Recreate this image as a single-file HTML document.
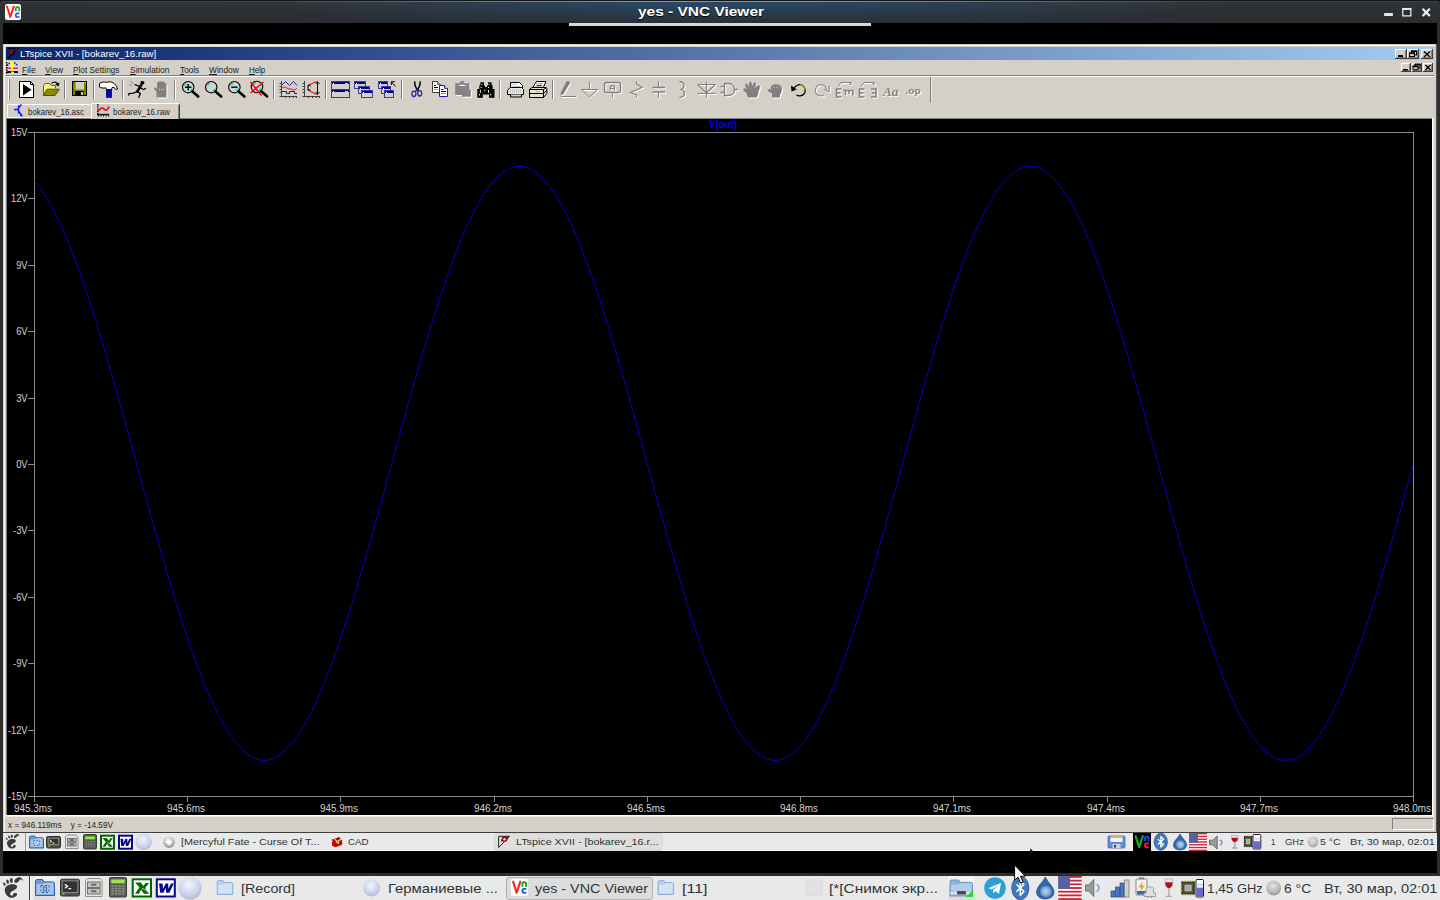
<!DOCTYPE html>
<html><head><meta charset="utf-8"><title>yes - VNC Viewer</title>
<style>
*{margin:0;padding:0;box-sizing:border-box}
html,body{width:1440px;height:900px;overflow:hidden;background:#000;font-family:"Liberation Sans",sans-serif}
#root div,#root svg,#root span.a{position:absolute}
#root{position:absolute;left:0;top:0;width:1440px;height:900px;overflow:hidden;background:#000}
.t{white-space:pre;z-index:6}
.t u{text-decoration:underline;text-underline-offset:1px}
#vt{left:0;top:0;width:1440px;height:23px;background:linear-gradient(#34373a 0,#2f3134 40%,#2b2d2f 100%);border-radius:4px 4px 0 0}
#vt2{left:0;top:0;width:1440px;height:23px;border-radius:4px 4px 0 0;background:linear-gradient(rgba(43,46,50,0) 0,rgba(43,46,50,.12) 30%,rgba(43,46,50,.92) 100%),linear-gradient(90deg,rgba(38,84,130,0) 0,rgba(38,84,130,0) 18%,rgba(38,84,130,.62) 45%,rgba(38,84,130,.62) 55%,rgba(38,84,130,0) 85%)}
#vt3{left:3px;top:1px;width:1434px;height:1px;background:linear-gradient(90deg,rgba(150,175,200,.1) 0,rgba(150,175,200,.12) 18%,rgba(150,180,210,.75) 45%,rgba(150,180,210,.75) 55%,rgba(150,175,200,.1) 85%)}
#vt0{left:0;top:0;width:1440px;height:1px;background:#14171a;border-radius:4px 4px 0 0}
#vhint{left:569px;top:23px;width:302px;height:3px;background:#d8d8d8}
#lb{left:0;top:20px;width:3px;height:856px;background:#2d2d2d}
#rb{left:1437px;top:20px;width:3px;height:856px;background:#2d2d2d}
#bb{left:0;top:873px;width:1440px;height:3px;background:#2d2d2d}
#lt{left:3px;top:44px;width:1434px;height:789px;background:#d4d0c8}
#lt1{left:4px;top:45px;width:1431px;height:1px;background:#f8f6f2}
#lt2{left:4px;top:45px;width:1px;height:787px;background:#f8f6f2}
#lt3{left:1435px;top:45px;width:1px;height:788px;background:#c8c4bc}
#lt4{left:1436px;top:44px;width:1px;height:789px;background:#585858}
#lt5{left:3px;top:832px;width:1434px;height:1px;background:#404040}
#lttitle{left:6px;top:47px;width:1428px;height:13px;background:linear-gradient(90deg,#0a246a 0,#a6caf0 100%)}
#msep1{left:6px;top:75px;width:1428px;height:1px;background:#808080}
#msep2{left:6px;top:76px;width:1428px;height:1px;background:#fff}
#plot{left:7px;top:119px;width:1425px;height:696px;background:#000}
#plotb1{left:6px;top:118px;width:1428px;height:1px;background:#808080}
#plotb2{left:6px;top:118px;width:1px;height:698px;background:#808080}
#plotb3{left:6px;top:815px;width:1428px;height:2px;background:linear-gradient(#fff 50%,#eceae4 50%)}
#plotb4{left:1432px;top:118px;width:2px;height:698px;background:linear-gradient(90deg,#fff 50%,#eceae4 50%)}
.ax{background:#8c8c8c}
.yl{left:0;width:27.6px;height:12px;line-height:12px;text-align:right;color:#d2d2d2;font-size:10.6px;transform-origin:100% 50%;transform:scaleX(.88);white-space:nowrap}
.yt{left:28px;width:6px;height:1px;background:#8c8c8c}
.xl{top:802.3px;width:60px;height:12px;line-height:12px;text-align:center;color:#d2d2d2;font-size:10.6px;transform:scaleX(.935);white-space:nowrap}
.xt{top:796px;width:1px;height:6px;background:#8c8c8c}
#tab1{left:7px;top:104px;width:84px;height:13px;background:#d4d0c8;border-top:1px solid #fff;border-left:1px solid #fff;border-radius:2px 2px 0 0}
#tab2{left:91px;top:103px;width:89px;height:16px;z-index:2;background:#d4d0c8;border-top:1px solid #fff;border-left:1px solid #fff;border-right:1px solid #404040;border-radius:2px 2px 0 0}
#tab2s{left:178px;top:105px;width:1px;height:14px;background:#808080;z-index:3}
#tabw{left:6px;top:117px;width:85px;height:1px;background:#f4f2ee}
#sbox{left:1392px;top:818px;width:42px;height:12px;border-top:1px solid #808080;border-left:1px solid #808080;border-right:1px solid #fff;border-bottom:1px solid #fff}
#itb{left:3px;top:833px;width:1434px;height:18px;background:#e9e9e9;border-bottom:1px solid #fbfbfb}
#otb{left:0;top:876px;width:1440px;height:24px;background:#e9e9e9}
</style></head><body><div id="root">
<div id="lb"></div><div id="rb"></div><div id="bb"></div>
<div id="vt"></div><div id="vt2"></div><div id="vt0"></div><div id="vt3"></div><div id="vhint"></div>
<div id="lt"></div><div id="lt1"></div><div id="lt2"></div><div id="lt3"></div><div id="lt4"></div><div id="lt5"></div>
<div id="lttitle"></div>
<div id="msep1"></div><div id="msep2"></div>
<div id="tabw"></div><div id="tab1"></div><div id="tab2"></div><div id="tab2s"></div>
<div id="plotb1"></div><div id="plotb2"></div><div id="plotb3"></div><div id="plotb4"></div>
<div id="plot"></div>
<div class="ax" style="left:28px;top:132px;width:1386px;height:1px"></div>
<div class="ax" style="left:28px;top:796px;width:1386px;height:1px"></div>
<div class="ax" style="left:34px;top:132px;width:1px;height:670px"></div>
<div class="ax" style="left:1413px;top:132px;width:1px;height:670px"></div>
<div class="yt" style="top:132px"></div><div class="yt" style="top:198px"></div><div class="yt" style="top:265px"></div><div class="yt" style="top:331px"></div><div class="yt" style="top:398px"></div><div class="yt" style="top:464px"></div><div class="yt" style="top:530px"></div><div class="yt" style="top:597px"></div><div class="yt" style="top:663px"></div><div class="yt" style="top:730px"></div><div class="yt" style="top:796px"></div><div class="yl" style="top:126px">15V</div><div class="yl" style="top:192px">12V</div><div class="yl" style="top:259px">9V</div><div class="yl" style="top:325px">6V</div><div class="yl" style="top:392px">3V</div><div class="yl" style="top:458px">0V</div><div class="yl" style="top:524px">-3V</div><div class="yl" style="top:591px">-6V</div><div class="yl" style="top:657px">-9V</div><div class="yl" style="top:724px">-12V</div><div class="yl" style="top:790px">-15V</div><div class="xt" style="left:34px"></div><div class="xt" style="left:187px"></div><div class="xt" style="left:340px"></div><div class="xt" style="left:494px"></div><div class="xt" style="left:647px"></div><div class="xt" style="left:800px"></div><div class="xt" style="left:953px"></div><div class="xt" style="left:1107px"></div><div class="xt" style="left:1260px"></div><div class="xt" style="left:1413px"></div><div class="xl" style="left:3.3000000000000007px">945.3ms</div><div class="xl" style="left:156.3px">945.6ms</div><div class="xl" style="left:309.3px">945.9ms</div><div class="xl" style="left:463.3px">946.2ms</div><div class="xl" style="left:616.3px">946.5ms</div><div class="xl" style="left:769.3px">946.8ms</div><div class="xl" style="left:922.3px">947.1ms</div><div class="xl" style="left:1076.3px">947.4ms</div><div class="xl" style="left:1229.3px">947.7ms</div><div class="xl" style="left:1371.2px;width:60px;text-align:right;transform-origin:100% 50%">948.0ms</div>
<div id="sbox"></div>
<div id="itb"></div>
<div id="otb"></div>
<svg style="left:0;top:0;z-index:5" width="1440" height="900" viewBox="0 0 1440 900">
<polyline fill="none" stroke="#0000d2" stroke-width="1" points="34,180.6 35,181.7 36,182.9 37,184.1 38,185.4 39,186.7 40,188.1 41,189.5 42,190.9 43,192.4 44,193.9 45,195.4 46,197.0 47,198.7 48,200.3 49,202.1 50,203.8 51,205.6 52,207.4 53,209.3 54,211.2 55,213.2 56,215.2 57,217.2 58,219.2 59,221.3 60,223.5 61,225.7 62,227.9 63,230.1 64,232.4 65,234.7 66,237.0 67,239.4 68,241.8 69,244.3 70,246.8 71,249.3 72,251.8 73,254.4 74,257.0 75,259.7 76,262.3 77,265.1 78,267.8 79,270.6 80,273.3 81,276.2 82,279.0 83,281.9 84,284.8 85,287.7 86,290.7 87,293.7 88,296.7 89,299.7 90,302.8 91,305.9 92,309.0 93,312.1 94,315.3 95,318.4 96,321.6 97,324.9 98,328.1 99,331.4 100,334.7 101,338.0 102,341.3 103,344.6 104,348.0 105,351.4 106,354.7 107,358.2 108,361.6 109,365.0 110,368.5 111,371.9 112,375.4 113,378.9 114,382.4 115,386.0 116,389.5 117,393.0 118,396.6 119,400.1 120,403.7 121,407.3 122,410.9 123,414.5 124,418.1 125,421.7 126,425.3 127,429.0 128,432.6 129,436.2 130,439.9 131,443.5 132,447.2 133,450.8 134,454.5 135,458.1 136,461.8 137,465.4 138,469.1 139,472.7 140,476.4 141,480.0 142,483.7 143,487.3 144,491.0 145,494.6 146,498.2 147,501.9 148,505.5 149,509.1 150,512.7 151,516.3 152,519.9 153,523.5 154,527.0 155,530.6 156,534.2 157,537.7 158,541.2 159,544.8 160,548.3 161,551.8 162,555.2 163,558.7 164,562.2 165,565.6 166,569.0 167,572.4 168,575.8 169,579.2 170,582.5 171,585.9 172,589.2 173,592.5 174,595.8 175,599.0 176,602.3 177,605.5 178,608.7 179,611.9 180,615.0 181,618.2 182,621.3 183,624.4 184,627.4 185,630.4 186,633.5 187,636.4 188,639.4 189,642.3 190,645.2 191,648.1 192,650.9 193,653.8 194,656.6 195,659.3 196,662.0 197,664.7 198,667.4 199,670.1 200,672.7 201,675.2 202,677.8 203,680.3 204,682.8 205,685.2 206,687.6 207,690.0 208,692.4 209,694.7 210,696.9 211,699.2 212,701.4 213,703.6 214,705.7 215,707.8 216,709.8 217,711.9 218,713.8 219,715.8 220,717.7 221,719.6 222,721.4 223,723.2 224,724.9 225,726.6 226,728.3 227,730.0 228,731.5 229,733.1 230,734.6 231,736.1 232,737.5 233,738.9 234,740.2 235,741.5 236,742.8 237,744.0 238,745.2 239,746.3 240,747.4 241,748.5 242,749.5 243,750.4 244,751.3 245,752.2 246,753.0 247,753.8 248,754.6 249,755.3 250,755.9 251,756.5 252,757.1 253,757.6 254,758.1 255,758.5 256,758.9 257,759.3 258,759.6 259,759.8 260,760.0 261,760.2 262,760.3 263,760.4 264,760.4 265,760.4 266,760.3 267,760.2 268,760.1 269,759.9 270,759.6 271,759.3 272,759.0 273,758.6 274,758.2 275,757.7 276,757.2 277,756.7 278,756.1 279,755.4 280,754.8 281,754.0 282,753.3 283,752.4 284,751.6 285,750.7 286,749.7 287,748.7 288,747.7 289,746.6 290,745.5 291,744.3 292,743.1 293,741.9 294,740.6 295,739.2 296,737.9 297,736.4 298,735.0 299,733.5 300,731.9 301,730.4 302,728.7 303,727.1 304,725.4 305,723.6 306,721.9 307,720.0 308,718.2 309,716.3 310,714.4 311,712.4 312,710.4 313,708.3 314,706.2 315,704.1 316,702.0 317,699.8 318,697.5 319,695.3 320,693.0 321,690.6 322,688.3 323,685.9 324,683.4 325,680.9 326,678.4 327,675.9 328,673.3 329,670.7 330,668.1 331,665.4 332,662.8 333,660.0 334,657.3 335,654.5 336,651.7 337,648.8 338,646.0 339,643.1 340,640.2 341,637.2 342,634.2 343,631.2 344,628.2 345,625.1 346,622.1 347,619.0 348,615.8 349,612.7 350,609.5 351,606.3 352,603.1 353,599.9 354,596.6 355,593.4 356,590.1 357,586.8 358,583.4 359,580.1 360,576.7 361,573.3 362,569.9 363,566.5 364,563.1 365,559.6 366,556.1 367,552.7 368,549.2 369,545.7 370,542.2 371,538.6 372,535.1 373,531.5 374,528.0 375,524.4 376,520.8 377,517.2 378,513.6 379,510.0 380,506.4 381,502.8 382,499.2 383,495.5 384,491.9 385,488.3 386,484.6 387,481.0 388,477.3 389,473.7 390,470.0 391,466.4 392,462.7 393,459.1 394,455.4 395,451.8 396,448.1 397,444.5 398,440.8 399,437.2 400,433.5 401,429.9 402,426.3 403,422.7 404,419.0 405,415.4 406,411.8 407,408.2 408,404.7 409,401.1 410,397.5 411,394.0 412,390.4 413,386.9 414,383.3 415,379.8 416,376.3 417,372.8 418,369.4 419,365.9 420,362.5 421,359.0 422,355.6 423,352.2 424,348.9 425,345.5 426,342.1 427,338.8 428,335.5 429,332.2 430,329.0 431,325.7 432,322.5 433,319.3 434,316.1 435,312.9 436,309.8 437,306.7 438,303.6 439,300.5 440,297.5 441,294.5 442,291.5 443,288.5 444,285.6 445,282.6 446,279.8 447,276.9 448,274.1 449,271.3 450,268.5 451,265.8 452,263.0 453,260.4 454,257.7 455,255.1 456,252.5 457,249.9 458,247.4 459,244.9 460,242.5 461,240.0 462,237.7 463,235.3 464,233.0 465,230.7 466,228.4 467,226.2 468,224.0 469,221.9 470,219.8 471,217.7 472,215.7 473,213.7 474,211.7 475,209.8 476,207.9 477,206.1 478,204.3 479,202.5 480,200.8 481,199.1 482,197.4 483,195.8 484,194.3 485,192.8 486,191.3 487,189.8 488,188.4 489,187.1 490,185.7 491,184.5 492,183.2 493,182.0 494,180.9 495,179.8 496,178.7 497,177.7 498,176.7 499,175.8 500,174.9 501,174.1 502,173.3 503,172.5 504,171.8 505,171.1 506,170.5 507,169.9 508,169.4 509,168.9 510,168.4 511,168.0 512,167.7 513,167.3 514,167.1 515,166.9 516,166.7 517,166.5 518,166.5 519,166.4 520,166.4 521,166.5 522,166.5 523,166.7 524,166.9 525,167.1 526,167.3 527,167.7 528,168.0 529,168.4 530,168.9 531,169.4 532,169.9 533,170.5 534,171.1 535,171.8 536,172.5 537,173.3 538,174.1 539,174.9 540,175.8 541,176.7 542,177.7 543,178.7 544,179.8 545,180.9 546,182.0 547,183.2 548,184.5 549,185.7 550,187.1 551,188.4 552,189.8 553,191.3 554,192.8 555,194.3 556,195.8 557,197.4 558,199.1 559,200.8 560,202.5 561,204.3 562,206.1 563,207.9 564,209.8 565,211.7 566,213.7 567,215.7 568,217.7 569,219.8 570,221.9 571,224.0 572,226.2 573,228.4 574,230.7 575,233.0 576,235.3 577,237.7 578,240.0 579,242.5 580,244.9 581,247.4 582,249.9 583,252.5 584,255.1 585,257.7 586,260.4 587,263.0 588,265.8 589,268.5 590,271.3 591,274.1 592,276.9 593,279.8 594,282.6 595,285.6 596,288.5 597,291.5 598,294.5 599,297.5 600,300.5 601,303.6 602,306.7 603,309.8 604,312.9 605,316.1 606,319.3 607,322.5 608,325.7 609,329.0 610,332.2 611,335.5 612,338.8 613,342.1 614,345.5 615,348.9 616,352.2 617,355.6 618,359.0 619,362.5 620,365.9 621,369.4 622,372.8 623,376.3 624,379.8 625,383.3 626,386.9 627,390.4 628,394.0 629,397.5 630,401.1 631,404.7 632,408.2 633,411.8 634,415.4 635,419.0 636,422.7 637,426.3 638,429.9 639,433.5 640,437.2 641,440.8 642,444.5 643,448.1 644,451.8 645,455.4 646,459.1 647,462.7 648,466.4 649,470.0 650,473.7 651,477.3 652,481.0 653,484.6 654,488.3 655,491.9 656,495.5 657,499.2 658,502.8 659,506.4 660,510.0 661,513.6 662,517.2 663,520.8 664,524.4 665,528.0 666,531.5 667,535.1 668,538.6 669,542.2 670,545.7 671,549.2 672,552.7 673,556.1 674,559.6 675,563.1 676,566.5 677,569.9 678,573.3 679,576.7 680,580.1 681,583.4 682,586.8 683,590.1 684,593.4 685,596.6 686,599.9 687,603.1 688,606.3 689,609.5 690,612.7 691,615.8 692,619.0 693,622.1 694,625.1 695,628.2 696,631.2 697,634.2 698,637.2 699,640.2 700,643.1 701,646.0 702,648.8 703,651.7 704,654.5 705,657.3 706,660.0 707,662.8 708,665.4 709,668.1 710,670.7 711,673.3 712,675.9 713,678.4 714,680.9 715,683.4 716,685.9 717,688.3 718,690.6 719,693.0 720,695.3 721,697.5 722,699.8 723,702.0 724,704.1 725,706.2 726,708.3 727,710.4 728,712.4 729,714.4 730,716.3 731,718.2 732,720.0 733,721.9 734,723.6 735,725.4 736,727.1 737,728.7 738,730.4 739,731.9 740,733.5 741,735.0 742,736.4 743,737.9 744,739.2 745,740.6 746,741.9 747,743.1 748,744.3 749,745.5 750,746.6 751,747.7 752,748.7 753,749.7 754,750.7 755,751.6 756,752.4 757,753.3 758,754.0 759,754.8 760,755.4 761,756.1 762,756.7 763,757.2 764,757.7 765,758.2 766,758.6 767,759.0 768,759.3 769,759.6 770,759.9 771,760.1 772,760.2 773,760.3 774,760.4 775,760.4 776,760.4 777,760.3 778,760.2 779,760.0 780,759.8 781,759.6 782,759.3 783,758.9 784,758.5 785,758.1 786,757.6 787,757.1 788,756.5 789,755.9 790,755.3 791,754.6 792,753.8 793,753.0 794,752.2 795,751.3 796,750.4 797,749.5 798,748.5 799,747.4 800,746.3 801,745.2 802,744.0 803,742.8 804,741.5 805,740.2 806,738.9 807,737.5 808,736.1 809,734.6 810,733.1 811,731.5 812,730.0 813,728.3 814,726.6 815,724.9 816,723.2 817,721.4 818,719.6 819,717.7 820,715.8 821,713.8 822,711.9 823,709.8 824,707.8 825,705.7 826,703.6 827,701.4 828,699.2 829,696.9 830,694.7 831,692.4 832,690.0 833,687.6 834,685.2 835,682.8 836,680.3 837,677.8 838,675.2 839,672.7 840,670.1 841,667.4 842,664.7 843,662.0 844,659.3 845,656.6 846,653.8 847,650.9 848,648.1 849,645.2 850,642.3 851,639.4 852,636.4 853,633.5 854,630.4 855,627.4 856,624.4 857,621.3 858,618.2 859,615.0 860,611.9 861,608.7 862,605.5 863,602.3 864,599.0 865,595.8 866,592.5 867,589.2 868,585.9 869,582.5 870,579.2 871,575.8 872,572.4 873,569.0 874,565.6 875,562.2 876,558.7 877,555.2 878,551.8 879,548.3 880,544.8 881,541.2 882,537.7 883,534.2 884,530.6 885,527.0 886,523.5 887,519.9 888,516.3 889,512.7 890,509.1 891,505.5 892,501.9 893,498.2 894,494.6 895,491.0 896,487.3 897,483.7 898,480.0 899,476.4 900,472.7 901,469.1 902,465.4 903,461.8 904,458.1 905,454.5 906,450.8 907,447.2 908,443.5 909,439.9 910,436.2 911,432.6 912,429.0 913,425.3 914,421.7 915,418.1 916,414.5 917,410.9 918,407.3 919,403.7 920,400.1 921,396.6 922,393.0 923,389.5 924,386.0 925,382.4 926,378.9 927,375.4 928,371.9 929,368.5 930,365.0 931,361.6 932,358.2 933,354.7 934,351.4 935,348.0 936,344.6 937,341.3 938,338.0 939,334.7 940,331.4 941,328.1 942,324.9 943,321.6 944,318.4 945,315.3 946,312.1 947,309.0 948,305.9 949,302.8 950,299.7 951,296.7 952,293.7 953,290.7 954,287.7 955,284.8 956,281.9 957,279.0 958,276.2 959,273.3 960,270.6 961,267.8 962,265.1 963,262.3 964,259.7 965,257.0 966,254.4 967,251.8 968,249.3 969,246.8 970,244.3 971,241.8 972,239.4 973,237.0 974,234.7 975,232.4 976,230.1 977,227.9 978,225.7 979,223.5 980,221.3 981,219.2 982,217.2 983,215.2 984,213.2 985,211.2 986,209.3 987,207.4 988,205.6 989,203.8 990,202.1 991,200.3 992,198.7 993,197.0 994,195.4 995,193.9 996,192.4 997,190.9 998,189.5 999,188.1 1000,186.7 1001,185.4 1002,184.1 1003,182.9 1004,181.7 1005,180.6 1006,179.5 1007,178.5 1008,177.4 1009,176.5 1010,175.6 1011,174.7 1012,173.8 1013,173.1 1014,172.3 1015,171.6 1016,170.9 1017,170.3 1018,169.8 1019,169.2 1020,168.8 1021,168.3 1022,167.9 1023,167.6 1024,167.3 1025,167.0 1026,166.8 1027,166.6 1028,166.5 1029,166.4 1030,166.4 1031,166.4 1032,166.5 1033,166.6 1034,166.7 1035,166.9 1036,167.1 1037,167.4 1038,167.8 1039,168.1 1040,168.5 1041,169.0 1042,169.5 1043,170.1 1044,170.6 1045,171.3 1046,172.0 1047,172.7 1048,173.5 1049,174.3 1050,175.1 1051,176.0 1052,177.0 1053,178.0 1054,179.0 1055,180.1 1056,181.2 1057,182.3 1058,183.6 1059,184.8 1060,186.1 1061,187.4 1062,188.8 1063,190.2 1064,191.6 1065,193.1 1066,194.7 1067,196.3 1068,197.9 1069,199.5 1070,201.2 1071,203.0 1072,204.7 1073,206.6 1074,208.4 1075,210.3 1076,212.2 1077,214.2 1078,216.2 1079,218.3 1080,220.3 1081,222.4 1082,224.6 1083,226.8 1084,229.0 1085,231.3 1086,233.6 1087,235.9 1088,238.3 1089,240.7 1090,243.1 1091,245.6 1092,248.1 1093,250.6 1094,253.2 1095,255.8 1096,258.4 1097,261.1 1098,263.8 1099,266.5 1100,269.2 1101,272.0 1102,274.8 1103,277.6 1104,280.5 1105,283.4 1106,286.3 1107,289.3 1108,292.2 1109,295.2 1110,298.3 1111,301.3 1112,304.4 1113,307.5 1114,310.6 1115,313.8 1116,316.9 1117,320.1 1118,323.3 1119,326.6 1120,329.8 1121,333.1 1122,336.4 1123,339.7 1124,343.0 1125,346.4 1126,349.7 1127,353.1 1128,356.5 1129,359.9 1130,363.4 1131,366.8 1132,370.3 1133,373.8 1134,377.2 1135,380.7 1136,384.3 1137,387.8 1138,391.3 1139,394.9 1140,398.4 1141,402.0 1142,405.6 1143,409.2 1144,412.8 1145,416.4 1146,420.0 1147,423.6 1148,427.2 1149,430.9 1150,434.5 1151,438.1 1152,441.8 1153,445.4 1154,449.1 1155,452.7 1156,456.4 1157,460.0 1158,463.7 1159,467.3 1160,471.0 1161,474.6 1162,478.3 1163,481.9 1164,485.6 1165,489.2 1166,492.9 1167,496.5 1168,500.1 1169,503.7 1170,507.4 1171,511.0 1172,514.6 1173,518.2 1174,521.8 1175,525.3 1176,528.9 1177,532.5 1178,536.0 1179,539.5 1180,543.1 1181,546.6 1182,550.1 1183,553.6 1184,557.0 1185,560.5 1186,564.0 1187,567.4 1188,570.8 1189,574.2 1190,577.6 1191,580.9 1192,584.3 1193,587.6 1194,590.9 1195,594.2 1196,597.5 1197,600.7 1198,604.0 1199,607.2 1200,610.4 1201,613.5 1202,616.7 1203,619.8 1204,622.9 1205,625.9 1206,629.0 1207,632.0 1208,635.0 1209,638.0 1210,640.9 1211,643.8 1212,646.7 1213,649.6 1214,652.4 1215,655.2 1216,658.0 1217,660.7 1218,663.5 1219,666.1 1220,668.8 1221,671.4 1222,674.0 1223,676.6 1224,679.1 1225,681.6 1226,684.1 1227,686.5 1228,688.9 1229,691.2 1230,693.6 1231,695.9 1232,698.1 1233,700.3 1234,702.5 1235,704.7 1236,706.8 1237,708.9 1238,710.9 1239,712.9 1240,714.9 1241,716.8 1242,718.7 1243,720.5 1244,722.3 1245,724.1 1246,725.8 1247,727.5 1248,729.2 1249,730.8 1250,732.4 1251,733.9 1252,735.4 1253,736.8 1254,738.2 1255,739.6 1256,740.9 1257,742.2 1258,743.4 1259,744.6 1260,745.8 1261,746.9 1262,748.0 1263,749.0 1264,750.0 1265,750.9 1266,751.8 1267,752.7 1268,753.5 1269,754.2 1270,754.9 1271,755.6 1272,756.2 1273,756.8 1274,757.4 1275,757.9 1276,758.3 1277,758.7 1278,759.1 1279,759.4 1280,759.7 1281,759.9 1282,760.1 1283,760.2 1284,760.3 1285,760.4 1286,760.4 1287,760.4 1288,760.3 1289,760.1 1290,760.0 1291,759.7 1292,759.5 1293,759.2 1294,758.8 1295,758.4 1296,758.0 1297,757.5 1298,757.0 1299,756.4 1300,755.8 1301,755.1 1302,754.4 1303,753.6 1304,752.8 1305,752.0 1306,751.1 1307,750.2 1308,749.2 1309,748.2 1310,747.1 1311,746.0 1312,744.9 1313,743.7 1314,742.5 1315,741.2 1316,739.9 1317,738.5 1318,737.1 1319,735.7 1320,734.2 1321,732.7 1322,731.1 1323,729.5 1324,727.9 1325,726.2 1326,724.5 1327,722.7 1328,720.9 1329,719.1 1330,717.2 1331,715.3 1332,713.3 1333,711.3 1334,709.3 1335,707.2 1336,705.1 1337,703.0 1338,700.8 1339,698.6 1340,696.4 1341,694.1 1342,691.8 1343,689.4 1344,687.0 1345,684.6 1346,682.1 1347,679.7 1348,677.1 1349,674.6 1350,672.0 1351,669.4 1352,666.7 1353,664.0 1354,661.3 1355,658.6 1356,655.8 1357,653.0 1358,650.2 1359,647.4 1360,644.5 1361,641.6 1362,638.6 1363,635.7 1364,632.7 1365,629.7 1366,626.6 1367,623.6 1368,620.5 1369,617.4 1370,614.2 1371,611.1 1372,607.9 1373,604.7 1374,601.4 1375,598.2 1376,594.9 1377,591.6 1378,588.3 1379,585.0 1380,581.7 1381,578.3 1382,574.9 1383,571.5 1384,568.1 1385,564.7 1386,561.3 1387,557.8 1388,554.3 1389,550.9 1390,547.4 1391,543.8 1392,540.3 1393,536.8 1394,533.2 1395,529.7 1396,526.1 1397,522.5 1398,519.0 1399,515.4 1400,511.8 1401,508.2 1402,504.5 1403,500.9 1404,497.3 1405,493.7 1406,490.0 1407,486.4 1408,482.7 1409,479.1 1410,475.4 1411,471.8 1412,468.1 1413,464.5"/>
<g id="misc">
<rect x="5" y="4" width="16" height="16" rx="2.2" fill="#fff"/>
<path d="M7 6.5L10.3 17L13.8 6.5" stroke="#ff2020" stroke-width="2" fill="none" stroke-linejoin="round" stroke-linecap="round"/>
<path d="M15.8 11.3V8.2C15.8 6.6 19.2 6.6 19.2 8.2V11.3" stroke="#10a010" stroke-width="1.7" fill="none"/>
<path d="M19.5 13.3H17.5C15.2 13.3 15.2 17 17.5 17H19.5" stroke="#1850ff" stroke-width="1.7" fill="none"/>
<rect x="1384" y="13" width="9" height="3" rx=".8" fill="#e6e6e6"/>
<rect x="1402.8" y="8.6" width="8" height="7.3" fill="none" stroke="#e6e6e6" stroke-width="1.3"/><rect x="1402.2" y="8" width="9.2" height="2" fill="#e6e6e6"/>
<path d="M1422.6 8.8L1429.8 16M1429.8 8.8L1422.6 16" stroke="#f0f0f0" stroke-width="2.3" stroke-linecap="butt"/>
<path d="M7.5 48.3H17.7L8 58.5" fill="none" stroke="#00001c" stroke-width="1.3"/><path d="M9.2 53.4L11.5 49.6L13 53.4Z" fill="#b00008" stroke="#b00008" stroke-width=".6"/><path d="M16.6 48.6L15.2 54" stroke="#a00008" stroke-width="1.5" stroke-dasharray="1.6 1"/><path d="M15.2 54L13 53.6" stroke="#00001c" stroke-width="1.2"/>
<rect x="1395" y="49" width="12" height="10" fill="#d4d0c8"/><rect x="1395" y="49" width="11" height="1" fill="#fff"/><rect x="1395" y="49" width="1" height="9" fill="#fff"/><rect x="1406" y="49" width="1" height="10" fill="#404040"/><rect x="1395" y="58" width="12" height="1" fill="#404040"/><rect x="1405" y="50" width="1" height="8" fill="#808080"/><rect x="1396" y="57" width="10" height="1" fill="#808080"/><rect x="1398" y="55" width="5" height="2" fill="#000"/>
<rect x="1407" y="49" width="12" height="10" fill="#d4d0c8"/><rect x="1407" y="49" width="11" height="1" fill="#fff"/><rect x="1407" y="49" width="1" height="9" fill="#fff"/><rect x="1418" y="49" width="1" height="10" fill="#404040"/><rect x="1407" y="58" width="12" height="1" fill="#404040"/><rect x="1417" y="50" width="1" height="8" fill="#808080"/><rect x="1408" y="57" width="10" height="1" fill="#808080"/><rect x="1411.5" y="51.0" width="5" height="4" fill="none" stroke="#000"/><rect x="1411" y="50.5" width="6" height="1.6" fill="#000"/><rect x="1409.5" y="53.0" width="5" height="3.5" fill="#d4d0c8" stroke="#000"/><rect x="1409" y="52.5" width="6" height="1.6" fill="#000"/>
<rect x="1421" y="49" width="12" height="10" fill="#d4d0c8"/><rect x="1421" y="49" width="11" height="1" fill="#fff"/><rect x="1421" y="49" width="1" height="9" fill="#fff"/><rect x="1432" y="49" width="1" height="10" fill="#404040"/><rect x="1421" y="58" width="12" height="1" fill="#404040"/><rect x="1431" y="50" width="1" height="8" fill="#808080"/><rect x="1422" y="57" width="10" height="1" fill="#808080"/><path d="M1424 51.5L1430 57M1430 51.5L1424 57" stroke="#000" stroke-width="1.5"/>
<rect x="1401" y="63" width="10" height="9" fill="#d4d0c8"/><rect x="1401" y="63" width="9" height="1" fill="#fff"/><rect x="1401" y="63" width="1" height="8" fill="#fff"/><rect x="1410" y="63" width="1" height="9" fill="#404040"/><rect x="1401" y="71" width="10" height="1" fill="#404040"/><rect x="1409" y="64" width="1" height="7" fill="#808080"/><rect x="1402" y="70" width="8" height="1" fill="#808080"/><rect x="1403" y="69" width="5" height="1.6" fill="#000"/>
<rect x="1412" y="63" width="10" height="9" fill="#d4d0c8"/><rect x="1412" y="63" width="9" height="1" fill="#fff"/><rect x="1412" y="63" width="1" height="8" fill="#fff"/><rect x="1421" y="63" width="1" height="9" fill="#404040"/><rect x="1412" y="71" width="10" height="1" fill="#404040"/><rect x="1420" y="64" width="1" height="7" fill="#808080"/><rect x="1413" y="70" width="8" height="1" fill="#808080"/><rect x="1415.0" y="64.2" width="5" height="4" fill="none" stroke="#000"/><rect x="1414.5" y="63.7" width="6" height="1.6" fill="#000"/><rect x="1413.0" y="66.2" width="5" height="3.5" fill="#d4d0c8" stroke="#000"/><rect x="1412.5" y="65.7" width="6" height="1.6" fill="#000"/>
<rect x="1423" y="63" width="10" height="9" fill="#d4d0c8"/><rect x="1423" y="63" width="9" height="1" fill="#fff"/><rect x="1423" y="63" width="1" height="8" fill="#fff"/><rect x="1432" y="63" width="1" height="9" fill="#404040"/><rect x="1423" y="71" width="10" height="1" fill="#404040"/><rect x="1431" y="64" width="1" height="7" fill="#808080"/><rect x="1424" y="70" width="8" height="1" fill="#808080"/><path d="M1425.5 65L1430.5 70M1430.5 65L1425.5 70" stroke="#000" stroke-width="1.4"/>
<g><rect x="7.5" y="63" width="10.5" height="10" fill="#dedcd8"/><path d="M7 65.7L10 62.7M14.2 62.7L18 65.7" stroke="#1818d8" fill="none" stroke-width="1.5" stroke-dasharray="1.6 .7"/><path d="M7.2 68.2H18" stroke="#e81818" stroke-width="1.4"/><path d="M6.8 72H18" stroke="#080850" stroke-width="2"/><path d="M6.7 62V74" stroke="#000" stroke-width="1.4" stroke-dasharray="1.5 1"/><path d="M10 62H14L13 70.5H11.500Z" fill="#ffff00"/><rect x="11" y="71.5" width="3" height="2.5" fill="#f4f000"/></g>
<path d="M18.5 105.5V113.5M18.5 109.5H14M18.5 108L21.5 104.5M18.5 111L22 116" stroke="#1010ff" stroke-width="1.4" fill="none"/><path d="M22.5 116.8L19.8 115.5L21.8 113.8Z" fill="#1010ff"/>
<rect x="99" y="104" width="10.200" height="9.800" fill="#c8c8c8"/><path d="M97.800 104V114.600" stroke="#101010" stroke-width="1.5" stroke-dasharray="1.4 .8"/><path d="M97 114.600H109.200" stroke="#101010" stroke-width="1.4"/><path d="M98.500 115V116.700M101 115V116.700M103.500 115V116.700M106 115V116.700M108.500 115V116.700" stroke="#202020" stroke-width=".9"/><path d="M98.800 110.600C100.500 108.200 102 107.300 103.500 108.600C105 110.200 106.500 110.500 107.600 109.200L109 107" stroke="#ff0000" stroke-width="1.600" fill="none" stroke-linecap="round"/>
</g>
<g id="toolbar">
<rect x="8" y="79" width="1" height="21" fill="#fff"/><rect x="9" y="79" width="1" height="21" fill="#808080"/>
<path d="M19.5 81.5H30.5L33.5 84.5V97.5H19.5Z" fill="#fff" stroke="#000"/><path d="M30.5 81.5V84.5H33.5" fill="none" stroke="#000"/><path d="M23 84L31.5 89.7L23 95.4Z" fill="#000"/>
<path d="M43.5 94V85.5L45 83.5H49.5L51 85.5H55.5V88" fill="#f4f47c" stroke="#6a6a00"/><path d="M43.2 95.5L47.2 89.2H59.3L55 95.5Z" fill="#8a8a00" stroke="#505000"/><path d="M51.5 83.5C53.5 81.5 56.5 81.5 58 84.5" fill="none" stroke="#000" stroke-width="1.2"/><path d="M59.5 82.5L58.5 86.5L55.2 84.6Z" fill="#000"/>
<rect x="64" y="80" width="1" height="19" fill="#808080"/><rect x="65" y="80" width="1" height="19" fill="#fff"/>
<rect x="72.5" y="81.5" width="14" height="14" fill="#808000" stroke="#000"/><rect x="75.5" y="82" width="8.5" height="7.5" fill="#d4d0c8"/><rect x="75" y="91" width="8.5" height="4.5" fill="#000"/><rect x="81" y="92" width="2" height="3" fill="#c6c6c6"/><rect x="85" y="82" width="1" height="1" fill="#d4d0c8"/>
<rect x="93" y="80" width="1" height="19" fill="#808080"/><rect x="94" y="80" width="1" height="19" fill="#fff"/>
<path d="M99.5 83.5C101 82 104 81.8 106.5 82.4C110.5 80.6 116 83 117.6 89L116 89.6C115 87.6 113.5 87 112 87.6L111.7 89.5H106.3L106 87.8C104 88.4 101 88.1 99.500 87Z" fill="#fff" stroke="#000" stroke-width="1"/><rect x="106.3" y="89.5" width="5.4" height="8.3" fill="#0000d0"/><rect x="106.3" y="89.5" width="1.2" height="8.3" fill="#000080"/><rect x="110.5" y="89.5" width="1.2" height="8.3" fill="#000080"/><rect x="106.3" y="91.5" width="5.4" height="1" fill="#000080"/>
<rect x="122" y="80" width="1" height="19" fill="#808080"/><rect x="123" y="80" width="1" height="19" fill="#fff"/>
<g stroke="#000" fill="none" stroke-linecap="round"><circle cx="142.3" cy="82.8" r="1.5" fill="#000"/><path d="M141.3 85L137.3 91.5" stroke-width="2.6"/><path d="M139.8 86.5L135 84.6M140 87.8L143.5 89.6L145.6 88.4" stroke-width="1.2"/><path d="M137.3 91.5L133.5 93.2L129 93.6L128.6 95M137.6 91.5L140.3 93.8L138.8 97.3" stroke-width="1.3"/></g><path d="M130.5 81.5L133.5 83.6M129 84.5L131.5 85.8" stroke="#707070" stroke-width=".9"/>
<g transform="translate(1,1)"><path d="M156.5 97.5V92L153.8 88.5C154.5 87 156 87.5 157 89V83.5C157.5 81.5 160 81 161 81.5C163 81 165.5 82 166.5 84.5V97.5Z" fill="#fff" stroke="none"/></g><path d="M156.5 97.5V92L153.8 88.5C154.5 87 156 87.5 157 89V83.5C157.5 81.5 160 81 161 81.5C163 81 165.5 82 166.5 84.5V97.5Z" fill="#808080" stroke="none"/><path d="M159 89.5h1m1 0h1m1 0h1" stroke="#d4d0c8" stroke-width="1"/>
<rect x="174" y="80" width="1" height="19" fill="#808080"/><rect x="175" y="80" width="1" height="19" fill="#fff"/>
<g><circle cx="188.2" cy="87.2" r="5.7" fill="#d6d4ce" stroke="#000" stroke-width="1.1"/>
<path d="M184.2 85.7 A4.2 4.2 0 0 1 187.2 83.2" stroke="#00e0e8" stroke-width="1.4" fill="none"/>
<path d="M192.2 88.2 A4.2 4.2 0 0 1 189.7 91.0" stroke="#00e0e8" stroke-width="1.4" fill="none"/>
<path d="M192.39999999999998 91.4 L198.2 96.5" stroke="#000" stroke-width="2.6" stroke-linecap="round"/><path d="M185 87.2H191.4M188.2 84V90.4" stroke="#000" stroke-width="1.4"/></g>
<g><circle cx="211.2" cy="87.2" r="5.7" fill="#d6d4ce" stroke="#000" stroke-width="1.1"/>
<path d="M207.2 85.7 A4.2 4.2 0 0 1 210.2 83.2" stroke="#00e0e8" stroke-width="1.4" fill="none"/>
<path d="M215.2 88.2 A4.2 4.2 0 0 1 212.7 91.0" stroke="#00e0e8" stroke-width="1.4" fill="none"/>
<path d="M215.39999999999998 91.4 L221.2 96.5" stroke="#000" stroke-width="2.6" stroke-linecap="round"/></g>
<g><circle cx="234.4" cy="87.2" r="5.7" fill="#d6d4ce" stroke="#000" stroke-width="1.1"/>
<path d="M230.4 85.7 A4.2 4.2 0 0 1 233.4 83.2" stroke="#00e0e8" stroke-width="1.4" fill="none"/>
<path d="M238.4 88.2 A4.2 4.2 0 0 1 235.9 91.0" stroke="#00e0e8" stroke-width="1.4" fill="none"/>
<path d="M238.6 91.4 L244.4 96.5" stroke="#000" stroke-width="2.6" stroke-linecap="round"/><path d="M231.2 87.2H237.6" stroke="#000" stroke-width="1.4"/></g>
<g><circle cx="257" cy="87" r="5.7" fill="#d6d4ce" stroke="#000" stroke-width="1.1"/>
<path d="M253 85.5 A4.2 4.2 0 0 1 256 83" stroke="#00e0e8" stroke-width="1.4" fill="none"/>
<path d="M261 88 A4.2 4.2 0 0 1 258.5 90.8" stroke="#00e0e8" stroke-width="1.4" fill="none"/>
<path d="M261.2 91.2 L267 96.3" stroke="#000" stroke-width="2.6" stroke-linecap="round"/><path d="M250.5 82L261.5 95.5M263.5 82L250.5 93" stroke="#ff0000" stroke-width="1.5"/></g>
<rect x="273" y="80" width="1" height="19" fill="#808080"/><rect x="274" y="80" width="1" height="19" fill="#fff"/>
<g fill="none"><path d="M281.5 81V96.5M279.5 96.5H297" stroke="#404040"/><path d="M279.5 83.5h2M279.5 86.5h2M279.5 89.5h2M279.5 92.5h2M285.5 96.5v1.5M289.5 96.5v1.5M293.5 96.5v1.5M296.5 96.5v1.5" stroke="#404040"/><path d="M281.5 85.5L285.5 81.5L289.5 85.5L293.5 81.5L297 85.5" stroke="#2020a0" stroke-width="1"/><path d="M281.5 88.5C283 87 285 86.5 287 88.2C289 89.5 291 88 293 89.8C294.5 90.5 296 89 297 88.3" stroke="#ff1010" stroke-width="1"/><path d="M281.5 91.5H286.5V93.5H289.5V91.5H294.5V93.5H297" stroke="#0000a0" stroke-width=".9"/></g>
<g fill="none"><path d="M304.5 81V96.5M302.5 96.5H320" stroke="#404040"/><path d="M302.5 83.5h2M302.5 86.5h2M302.5 89.5h2M302.5 92.5h2M308.5 96.5v1.5M312.5 96.5v1.5M316.5 96.5v1.5M319.5 96.5v1.5" stroke="#404040"/><path d="M309 85L316.5 81.5M309 90.5L316.5 94.5" stroke="#ff1010" stroke-width="1.1"/><path d="M309 85C307.5 87 307.5 89 309 90.5M317.5 82V94" stroke="#000" stroke-width="1"/><path d="M315.5 84L317.5 81.5L319.5 84M315.5 92L317.5 94.5L319.5 92M307.5 86.5L309 84.5L310.5 86.5M307.5 89L309 91L310.5 89" stroke="#000" stroke-width=".9"/></g>
<rect x="325" y="80" width="1" height="19" fill="#808080"/><rect x="326" y="80" width="1" height="19" fill="#fff"/>
<g shape-rendering="crispEdges"><rect x="331.5" y="81.5" width="18" height="8" fill="#d4d0c8" stroke="#3434a4"/><rect x="332" y="82" width="17" height="2.4" fill="#000080"/><rect x="331.5" y="89.5" width="18" height="8" fill="#d4d0c8" stroke="#3434a4"/><rect x="332" y="90" width="17" height="2.4" fill="#000080"/><rect x="333" y="83" width="1" height="1" fill="#fff"/><rect x="345" y="83" width="3" height="1" fill="#c0c0ff"/><rect x="333" y="91" width="1" height="1" fill="#fff"/><rect x="345" y="91" width="3" height="1" fill="#c0c0ff"/></g>
<g shape-rendering="crispEdges"><rect x="354.5" y="81.5" width="11" height="7" fill="#d4d0c8" stroke="#2c2ca4" stroke-width=".9"/><rect x="355" y="82" width="10" height="2" fill="#000080"/><rect x="355.5" y="82.5" width="1" height="1" fill="#fff"/><rect x="358.5" y="86.5" width="11" height="7" fill="#d4d0c8" stroke="#2c2ca4" stroke-width=".9"/><rect x="359" y="87" width="10" height="2" fill="#000080"/><rect x="359.5" y="87.5" width="1" height="1" fill="#fff"/><rect x="361.5" y="90.5" width="11" height="7" fill="#d4d0c8" stroke="#2c2ca4" stroke-width=".9"/><rect x="362" y="91" width="10" height="2" fill="#000080"/><rect x="362.5" y="91.5" width="1" height="1" fill="#fff"/></g>
<g shape-rendering="crispEdges"><rect x="378.5" y="81.5" width="9" height="7" fill="#d4d0c8" stroke="#2c2ca4" stroke-width=".9"/><rect x="379" y="82" width="8" height="2" fill="#000080"/><rect x="379.5" y="82.5" width="1" height="1" fill="#fff"/><rect x="381.5" y="86.5" width="9" height="7" fill="#d4d0c8" stroke="#2c2ca4" stroke-width=".9"/><rect x="382" y="87" width="8" height="2" fill="#000080"/><rect x="382.5" y="87.5" width="1" height="1" fill="#fff"/><rect x="384.5" y="90.5" width="9" height="7" fill="#d4d0c8" stroke="#2c2ca4" stroke-width=".9"/><rect x="385" y="91" width="8" height="2" fill="#000080"/><rect x="385.5" y="91.5" width="1" height="1" fill="#fff"/></g><path d="M395.5 86.5L391.5 82M391.3 85V81.7H394.8" stroke="#000" stroke-width="1" fill="none"/>
<rect x="401" y="80" width="1" height="19" fill="#808080"/><rect x="402" y="80" width="1" height="19" fill="#fff"/>
<g fill="none"><path d="M414.800 81.300C414.300 84.500 415.800 88 418.300 91M420 81.300C420.500 84.500 419 88 416.500 91" stroke="#000" stroke-width="1.500"/><ellipse cx="413.900" cy="93.800" rx="2" ry="2.700" stroke="#2828a0" stroke-width="1.300"/><ellipse cx="419.700" cy="93.300" rx="2" ry="2.700" stroke="#2828a0" stroke-width="1.300"/><path d="M415.500 91L417.400 89.300L419.300 90.800" stroke="#2828a0" stroke-width="1.200"/></g>
<g><path d="M432.500 81.500H437.500L440.500 84.500V92.500H432.500Z" fill="#fff" stroke="#404040"/><path d="M437.500 81.500V84.500H440.500" fill="#c0c0c0" stroke="#404040" stroke-width=".8"/><path d="M434 85.500h2M434 87.500h4" stroke="#000" stroke-width="1"/><path d="M434 89.500h4" stroke="#909090" stroke-width="1"/><path d="M439.500 85.500H444.500L447.500 88.500V96.500H439.500Z" fill="#fff" stroke="#1818a0"/><path d="M444.500 85.500V88.500H447.500" fill="#c0c0e0" stroke="#1818a0" stroke-width=".8"/><path d="M441 89.500h2.500M441 91.500h5" stroke="#000" stroke-width="1"/><path d="M441 93.500h5" stroke="#909090" stroke-width="1"/></g>
<g transform="translate(1,1)"><path d="M455.2 83.2H460.2V81.300H464.400V83.200H469.400V89.800H470.800V96.700H462V95H455.200Z" fill="#fff"/></g><path d="M455.2 83.2H460.2V81.300H464.400V83.200H469.400V89.800H470.800V96.700H462V95H455.200Z" fill="#848484"/><path d="M458.500 86C459.500 84.300 465 84.300 466 86Z" fill="#f4f4f4"/>
<g fill="#000"><rect x="480.300" y="82.300" width="3.700" height="4"/><rect x="479.300" y="85.500" width="5.700" height="4"/><rect x="477.300" y="89" width="5.500" height="8.800"/><rect x="482.500" y="87" width="6.500" height="7.500"/><rect x="488" y="82.300" width="3.700" height="4"/><rect x="487" y="85.500" width="5.700" height="4"/><rect x="489" y="89" width="5.500" height="8.800"/></g><g fill="#fff"><rect x="481.400" y="83.800" width="1" height="1"/><rect x="480.600" y="87" width="1" height="1"/><rect x="479.900" y="89.800" width=".9" height="3"/><rect x="479" y="94" width="1" height="1.400"/><rect x="484.300" y="89.600" width="1" height="1.400"/><rect x="488.400" y="83.800" width="1" height="1"/><rect x="488" y="87" width="1" height="1"/><rect x="488" y="89.800" width=".9" height="3"/><rect x="490.200" y="94" width="1" height="1.400"/></g>
<rect x="499" y="80" width="1" height="19" fill="#808080"/><rect x="500" y="80" width="1" height="19" fill="#fff"/>
<g><path d="M510.5 88V82.5H519.5L522.5 85.5V88" fill="#fff" stroke="#000"/><path d="M512 84.5h5M512 86.5h8" stroke="#b0b0b0" stroke-width=".8"/><path d="M507.5 94.5V90.5L510 87.5H521.5L523.5 89.5V94.5Z" fill="#e8e8e8" stroke="#000"/><path d="M510.5 94.5V97H521.5V94.5" fill="#d0d0d0" stroke="#000"/><path d="M510 90h11M510 92h11" stroke="#a8a8a8" stroke-dasharray="1 1"/></g>
<g><path d="M532.5 88L536.5 81.5H546L543 88Z" fill="#fff" stroke="#000"/><path d="M536.5 85.5h5.5" stroke="#404040" stroke-width="1.4"/><path d="M535.5 83.5h7.5M534.5 87h7" stroke="#a0a0a0" stroke-width=".7"/><path d="M529.5 97.5V89.5L532 87.5H546L546.8 88.5V93.5L543.5 97.5Z" fill="#e4e0d8" stroke="#000"/><path d="M529.5 89.5H543.5L546.5 87.8M543.5 89.5V97.5M529.5 93.5H543.5L546.5 90.5" fill="none" stroke="#000"/><rect x="536" y="91" width="4" height="1.5" fill="#d8d020"/></g>
<rect x="552" y="80" width="1" height="19" fill="#808080"/><rect x="553" y="80" width="1" height="19" fill="#fff"/>
<g transform="translate(1,1)"><path d="M566.5 81.500C568.500 80.300 570.500 81.500 569.800 83.500L563.500 94L560.500 95.500L561 92Z" fill="#fff" stroke="none"/><path d="M561 96.5H576" stroke="#fff" fill="none"/></g><path d="M566.5 81.500C568.500 80.300 570.500 81.500 569.800 83.500L563.500 94L560.500 95.500L561 92Z" fill="#808080" stroke="none"/><path d="M561 96.5H576" stroke="#808080" fill="none"/>
<g transform="translate(1,1)"><path d="M589.5 81.5V89.5M581.5 89.5H597.5L589.5 97Z" stroke="#fff" fill="none"/></g><path d="M589.5 81.5V89.5M581.5 89.5H597.5L589.5 97Z" stroke="#808080" fill="none"/>
<g transform="translate(1,1)"><rect x="604.5" y="82.5" width="16" height="10" rx="2" stroke="#fff" fill="none" stroke-width="1.4"/><path d="M612.5 92.5V97.5" stroke="#fff" fill="none"/><path d="M610.5 90.5V86.5L611.5 85.5H613.5L614.5 86.5V90.5M610.5 88.5H614.5" stroke="#fff" fill="none" stroke-width="1.2"/></g><rect x="604.5" y="82.5" width="16" height="10" rx="2" stroke="#808080" fill="none" stroke-width="1.4"/><path d="M612.5 92.5V97.5" stroke="#808080" fill="none"/><path d="M610.5 90.5V86.5L611.5 85.5H613.5L614.5 86.5V90.5M610.5 88.5H614.5" stroke="#808080" fill="none" stroke-width="1.2"/>
<g transform="translate(1,1)"><path d="M636.5 81.5V84L642 87.5L630.5 92.5L636.5 95V97.5" stroke="#fff" fill="none" stroke-width="1.2"/></g><path d="M636.5 81.5V84L642 87.5L630.5 92.5L636.5 95V97.5" stroke="#808080" fill="none" stroke-width="1.2"/>
<g transform="translate(1,1)"><path d="M658.5 81.5V87M658.5 92.5V97.5" stroke="#fff" fill="none" stroke-width="1.2"/><path d="M652.5 87.5H665M652.5 92H665" stroke="#fff" fill="none" stroke-width="1.4"/></g><path d="M658.5 81.5V87M658.5 92.5V97.5" stroke="#808080" fill="none" stroke-width="1.2"/><path d="M652.5 87.5H665M652.5 92H665" stroke="#808080" fill="none" stroke-width="1.4"/>
<g transform="translate(1,1)"><path d="M679.5 81.5C682 81.800 684 83 684 85.500C684 88 682.500 89 681 89.500C682.500 90 684.500 91 684.500 93.500C684.500 96 682 97.200 679.500 97.500" stroke="#fff" fill="none" stroke-width="1.3"/></g><path d="M679.5 81.5C682 81.800 684 83 684 85.500C684 88 682.500 89 681 89.500C682.500 90 684.500 91 684.500 93.500C684.500 96 682 97.200 679.500 97.500" stroke="#808080" fill="none" stroke-width="1.3"/>
<g transform="translate(1,1)"><path d="M706.5 81.5V97.5M697.5 84.5H715.5M698 85L706.5 93L715 85M697.5 93.5H715.5" stroke="#fff" fill="none" stroke-width="1.2"/></g><path d="M706.5 81.5V97.5M697.5 84.5H715.5M698 85L706.5 93L715 85M697.5 93.5H715.5" stroke="#808080" fill="none" stroke-width="1.2"/>
<g transform="translate(1,1)"><path d="M720.5 86.5H724.5M720.5 92.5H724.5M724.5 83.5V95.5H728C733 95.5 734.5 92 734.5 89.5C734.5 87 733 83.5 728 83.5ZM734.5 89.5H738" stroke="#fff" fill="none" stroke-width="1.3"/></g><path d="M720.5 86.5H724.5M720.5 92.5H724.5M724.5 83.5V95.5H728C733 95.5 734.5 92 734.5 89.5C734.5 87 733 83.5 728 83.5ZM734.5 89.5H738" stroke="#808080" fill="none" stroke-width="1.3"/>
<g transform="translate(1,1)"><path d="M748 97.5L746.5 93C744.5 92 743 90 743.5 88.5C745 88 746 89 747 90C746 87.5 745 85 745.5 83.5C747 83 748 85 748.5 87C748.5 84.5 749 82 750.5 81.5C752 82 752 84.5 752 86.5C752.5 84 753.5 82 755 82.5C756.5 83.5 756 86 755.5 88C756.5 86 758 84.5 759.5 85.5C760.5 87 759.5 89.5 758.5 91.5C758.5 94 757.5 96 756.5 97.5Z" fill="#fff"/></g><path d="M748 97.5L746.5 93C744.5 92 743 90 743.5 88.5C745 88 746 89 747 90C746 87.5 745 85 745.5 83.5C747 83 748 85 748.5 87C748.5 84.5 749 82 750.5 81.5C752 82 752 84.5 752 86.5C752.5 84 753.5 82 755 82.5C756.5 83.5 756 86 755.5 88C756.5 86 758 84.5 759.5 85.5C760.5 87 759.5 89.5 758.5 91.5C758.5 94 757.5 96 756.5 97.5Z" fill="#808080"/><path d="M749 86.5l3 3M753.5 85.5l2 3" stroke="#d4d0c8" stroke-width=".8" stroke-dasharray="1 1"/>
<g transform="translate(1,1)"><path d="M772 97.5V93.5C769.5 92.5 767.5 91 767.5 89.5C768.5 88.5 770 89 771 89.5C770.5 87.5 771 85.5 772.5 85C773.5 84 775 84 776 84.5C777 84 778.5 84 779.5 85C781 85.5 782 87 782 89C782 91.5 781 93.5 780 94.5V97.5Z" fill="#fff"/></g><path d="M772 97.5V93.5C769.5 92.5 767.5 91 767.5 89.5C768.5 88.5 770 89 771 89.5C770.5 87.5 771 85.5 772.5 85C773.5 84 775 84 776 84.5C777 84 778.5 84 779.5 85C781 85.5 782 87 782 89C782 91.5 781 93.5 780 94.5V97.5Z" fill="#808080"/><path d="M773 87h1.5m1.5 0h1.5m1.5 0h1" stroke="#d4d0c8" stroke-width=".8"/>
<path d="M793.5 89.5C795 85.5 799 83.5 802.5 85.5C805.5 87.5 806 91.5 804 94C802 96.2 798.5 96.3 796.5 95" stroke="#000" fill="none" stroke-width="1.3"/><path d="M800 84.6C803.5 85.5 805 88 805.3 90" stroke="#a0a000" fill="none" stroke-width="1.2"/><path d="M791 85.5L791.5 91.5L796.8 89.5Z" fill="#000"/>
<g transform="translate(1,1)"><path d="M827 89.5C825.5 85.5 821.5 83.5 818 85.5C815 87.5 814.5 91.5 816.5 94C818.5 96.2 822 96.3 824 95M829.5 85.5L829 91.5L823.7 89.5" stroke="#fff" fill="none" stroke-width="1.3"/></g><path d="M827 89.5C825.5 85.5 821.5 83.5 818 85.5C815 87.5 814.5 91.5 816.5 94C818.5 96.2 822 96.3 824 95M829.5 85.5L829 91.5L823.7 89.5" stroke="#909090" fill="none" stroke-width="1.3"/>
<g transform="translate(1,1)"><path d="M841.5 89H836.5V97H841.5M836.5 93.0H840.5" stroke="#fff" fill="none" stroke-width="1.6"/><path d="M843 90.5H853.5M845.5 90.5V95M849 90.5V94M853 90.5V95.5" stroke="#fff" fill="none" stroke-width="1.5"/><path d="M838 86.5L841 82.5H851L849.5 84.5M851 82.5V85" stroke="#fff" fill="none" stroke-width="1"/></g><path d="M841.5 89H836.5V97H841.5M836.5 93.0H840.5" stroke="#808080" fill="none" stroke-width="1.6"/><path d="M843 90.5H853.5M845.5 90.5V95M849 90.5V94M853 90.5V95.5" stroke="#808080" fill="none" stroke-width="1.5"/><path d="M838 86.5L841 82.5H851L849.5 84.5M851 82.5V85" stroke="#808080" fill="none" stroke-width="1"/>
<g transform="translate(1,1)"><path d="M864.5 89H859.5V97H864.5M859.5 93.0H863.5" stroke="#fff" fill="none" stroke-width="1.6"/><path d="M871 89H876V97H871M876 93.0H872" stroke="#fff" fill="none" stroke-width="1.6"/><path d="M861 86.5L864 82.5H874L872.5 84.5M874 82.5V85" stroke="#fff" fill="none" stroke-width="1"/></g><path d="M864.5 89H859.5V97H864.5M859.5 93.0H863.5" stroke="#808080" fill="none" stroke-width="1.6"/><path d="M871 89H876V97H871M876 93.0H872" stroke="#808080" fill="none" stroke-width="1.6"/><path d="M861 86.5L864 82.5H874L872.5 84.5M874 82.5V85" stroke="#808080" fill="none" stroke-width="1"/>
<text x="884" y="96.5" font-family="Liberation Serif" font-style="italic" font-weight="bold" font-size="12.5" fill="#fff" textLength="15.500" lengthAdjust="spacingAndGlyphs">Aa</text><text x="883" y="95.5" font-family="Liberation Serif" font-style="italic" font-weight="bold" font-size="12.5" fill="#808080" textLength="15.500" lengthAdjust="spacingAndGlyphs">Aa</text>
<text x="906.5" y="94.5" font-family="Liberation Sans" font-weight="bold" font-size="9.8" fill="#fff" textLength="15" lengthAdjust="spacingAndGlyphs">.op</text><text x="905.5" y="93.5" font-family="Liberation Sans" font-weight="bold" font-size="9.8" fill="#808080" textLength="15" lengthAdjust="spacingAndGlyphs">.op</text>
<rect x="930" y="77" width="1" height="26" fill="#808080"/><rect x="931" y="77" width="1" height="26" fill="#e8e6e0"/>
</g>
<g id="inner">
<g transform="translate(3.67,830.25) scale(0.71)" fill="#3b3c3a"><path d="M6.2 14.6C8 12.8 10 12.2 11.8 12.3C14.5 12.2 16.5 12.800 17 14C17.5 15.600 16.5 16.800 14.6 17.800C13 18.700 11.5 19.5 10.8 20.300C9.800 21.300 9.900 22.400 10.8 23.200C11.600 23.900 12.600 23.900 13 23C13.300 22.200 13.200 21.600 13.600 21.300C14.5 20.800 16 20.800 16.800 21.200C17.300 22 17 23.200 16.200 24C15 25.200 13 25.900 11 25.800C9.5 25.700 8.300 25 7.200 23.800C6 22.5 5.200 21 4.800 19C4.5 17.300 5 15.800 6.200 14.600Z"/><ellipse cx="4.35" cy="12.1" rx="1.05" ry="1.75" transform="rotate(-36 4.35 12.1)"/><ellipse cx="7.6" cy="9.6" rx="1.2" ry="2.2" transform="rotate(-14 7.6 9.6)"/><ellipse cx="11.35" cy="8.5" rx="1.45" ry="2.4" transform="rotate(6 11.35 8.5)"/><path d="M14.2 9.600C14.5 7.800 16 6.300 18 5.600C19.600 5.100 20.800 5.400 21.600 6.300C22.400 7.200 22.900 8 23 8.700C22.200 8.300 21.600 7.600 20.800 7.200C20 7.400 19.5 8.300 18.800 9.200C17.800 10.400 16.5 11 15.300 10.800C14.5 10.600 14.100 10.200 14.200 9.600Z"/></g>
<rect x="25" y="833" width="1" height="18" fill="#9a9a9a"/>
<g opacity="1"><path d="M29.5 848.0V837.0L30.5 836.0H34.7L35.75 837.71H42.5L43.5 838.71V848.0Z" fill="#6f9ad5" stroke="#2f62ae"/><path d="M30.5 847.0V839.4H35.0L36.2 838.36H42.5V847.0Z" fill="#a9c5ea"/></g>
<rect x="33.5" y="840.500" width="6" height="5" fill="none" stroke="#2f62ae" stroke-width=".8" stroke-dasharray="1.5 1.5"/>
<rect x="46.5" y="836.5" width="14" height="11.5" rx="1.6" fill="#50524e" stroke="#2c2e2a"/><rect x="48.2" y="838.2" width="10.6" height="6.3" fill="#303234" stroke="#9a9c98" stroke-width=".8"/><path d="M49.6 840.0L51.7 841.375L49.6 842.75M52.3 843.0H54.4" stroke="#f4f4f4" stroke-width="1.00" fill="none"/><rect x="48.2" y="845.6" width="1.7999999999999998" height="1.3" fill="#73d216"/>
<path d="M65.5 848.5V837.0L67.5 835.0H76.0L78.0 837.0V848.5Z" fill="#e4e4e0" stroke="#8e908c"/><rect x="67.5" y="838.5" width="8.5" height="3.25" fill="#c2c2be" stroke="#70726e"/><rect x="67.5" y="842.75" width="8.5" height="3.25" fill="#c2c2be" stroke="#70726e"/><rect x="69.725" y="839.175" width="4.05" height="1.8" fill="#60625e"/><rect x="69.725" y="843.425" width="4.05" height="1.8" fill="#60625e"/>
<rect x="83.5" y="834.5" width="13" height="14.5" rx="1.2" fill="#5a5c58" stroke="#3a3c38"/><rect x="85" y="836.2" width="10" height="3.1" fill="#9be552" stroke="#4e9a06" stroke-width=".6"/><rect x="85.35" y="841.25" width="1.60" height="0.62" fill="#8c8e8a"/><rect x="87.85" y="841.25" width="1.60" height="0.62" fill="#8c8e8a"/><rect x="90.35" y="841.25" width="1.60" height="0.62" fill="#8c8e8a"/><rect x="92.85" y="841.25" width="1.60" height="0.62" fill="#8c8e8a"/><rect x="85.35" y="842.78" width="1.60" height="0.62" fill="#8c8e8a"/><rect x="87.85" y="842.78" width="1.60" height="0.62" fill="#8c8e8a"/><rect x="90.35" y="842.78" width="1.60" height="0.62" fill="#8c8e8a"/><rect x="92.85" y="842.78" width="1.60" height="0.62" fill="#8c8e8a"/><rect x="85.35" y="844.30" width="1.60" height="0.62" fill="#8c8e8a"/><rect x="87.85" y="844.30" width="1.60" height="0.62" fill="#8c8e8a"/><rect x="90.35" y="844.30" width="1.60" height="0.62" fill="#8c8e8a"/><rect x="92.85" y="844.30" width="1.60" height="0.62" fill="#8c8e8a"/><rect x="85.35" y="845.83" width="1.60" height="0.62" fill="#8c8e8a"/><rect x="87.85" y="845.83" width="1.60" height="0.62" fill="#8c8e8a"/><rect x="90.35" y="845.83" width="1.60" height="0.62" fill="#8c8e8a"/><rect x="92.85" y="845.83" width="1.60" height="0.62" fill="#8c8e8a"/>
<rect x="101" y="835.7" width="13" height="13" fill="#fff" stroke="#006400" stroke-width="2"/><path d="M102.55 838.0H106.75L108.7 840.7L110.2 838.3000000000001H112.9L109.9 842.2L112.9 846.7H109.0L106.9 843.7L105.4 846.7H102.4L105.7 841.9000000000001Z" fill="#006c00"/><path d="M107.5 842.5L112.9 845.5" stroke="#fff" stroke-width=".7"/>
<rect x="119" y="835.7" width="13" height="13" fill="#fff" stroke="#08088a" stroke-width="2"/><path d="M120.4 838.75H123.1L123.4 842.95L125.5 838.75H127.3L127.45 842.95L129.4 838.75H131.5L128.2 845.95H125.8L125.5 842.2L123.7 845.95H121.3Z" fill="#08088a"/>
<defs><radialGradient id="sp1" cx="0.45" cy="0.35" r="0.75"><stop offset="0" stop-color="#f2f5fb"/><stop offset="0.6" stop-color="#c8d3e8"/><stop offset="1" stop-color="#a2aed0"/></radialGradient></defs><circle cx="143.5" cy="842" r="8.3" fill="url(#sp1)"/>
<defs><radialGradient id="sp2" cx="0.45" cy="0.35" r="0.75"><stop offset="0" stop-color="#ffffff"/><stop offset="0.6" stop-color="#b8b8b8"/><stop offset="1" stop-color="#7a7a7a"/></radialGradient></defs><circle cx="169" cy="842.2" r="5.8" fill="url(#sp2)"/>
<path d="M165.500 841L169 845.500L172.500 841Z" fill="#fff" opacity=".9"/>
<path d="M332 841.800L342.200 839.800V844.800L335.500 847.300L332 845.800Z" fill="#d40808"/><path d="M331.500 839.700L339.300 837L341.200 839.300L333.600 842.300Z" fill="#a80404"/><path d="M334 838.200L339 844M341 838.600L336.500 843" stroke="#c8c8c8" stroke-width="1.300"/><path d="M336.300 840.800L339 843.600" stroke="#edd400" stroke-width="1.500"/><path d="M332 843.500L335.500 845.200L342.200 842.600" stroke="#8c0000" stroke-width=".7" fill="none"/>
<rect x="494.500" y="833.500" width="168" height="17" rx="3" fill="#dfdfdd" stroke="#d2d2d0" stroke-width=".8"/>
<path d="M498.700 836.300V847.500L509.500 836.300Z" fill="#ececec" stroke="#1a1a1a" stroke-width="1"/><path d="M500.600 841.500L502.500 836.800H509L506.500 841.500Z" fill="#a00008"/><circle cx="504.500" cy="839.300" r="1.200" fill="#e8e8e8"/>
<rect x="1108" y="836" width="17" height="12" rx="1.2" fill="#5f8fd2" stroke="#3a68b0" stroke-width=".8"/><rect x="1110.500" y="836.500" width="12" height="5.500" fill="#f4f4f4"/><rect x="1110.500" y="836.500" width="12" height="1.3" fill="#f0a030"/><rect x="1112.500" y="844" width="8" height="4" fill="#c8d4e8"/><rect x="1114" y="845" width="2" height="2.500" fill="#3a3a3a"/>
<rect x="1133" y="833" width="18" height="18" fill="#000"/>
<g transform="translate(1133.5,833.5) scale(1.06)"><rect x="0" y="0" width="16" height="16" rx="2" fill="#000"/><path d="M2 2.500L5.300 13L8.800 2.500" stroke="#10b020" stroke-width="2" fill="none" stroke-linejoin="round" stroke-linecap="round"/><path d="M10.800 7.300V4.200C10.800 2.600 14.200 2.600 14.200 4.200V7.300" stroke="#2040ff" stroke-width="1.700" fill="none"/><path d="M14.500 9.300H12.500C10.200 9.300 10.200 13 12.500 13H14.500" stroke="#ff2020" stroke-width="1.700" fill="none"/></g>
<ellipse cx="1160.8" cy="841.8" rx="6.6" ry="8.5" fill="#3f78bd" stroke="#2a5a9a" stroke-width=".8"/><path d="M1157.83 839.0799999999999L1163.572 844.3499999999999L1160.8 847.0699999999999V836.53L1163.572 839.25L1157.83 844.52" stroke="#fff" stroke-width="1.20" fill="none" stroke-linejoin="round"/>
<defs><radialGradient id="dr1" cx="0.5" cy="0.5" r="0.5"><stop offset="0" stop-color="#b8d4ee"/><stop offset="0.7" stop-color="#7eaad8"/><stop offset="1" stop-color="#4a7cb8"/></radialGradient></defs><path d="M1180.0 834C1182.6 838.8 1186.5 841.2 1186.5 844.88C1186.5 848.4 1183.25 850 1180.0 850C1176.75 850 1173.5 848.4 1173.5 844.88C1173.5 841.2 1177.4 838.8 1180.0 834Z" fill="#3566a6" stroke="#2b5c9c" stroke-width=".8"/><circle cx="1180.39" cy="844.56" r="4.42" fill="url(#dr1)"/>
<rect x="1189" y="833" width="18" height="18" fill="#fff"/><rect x="1189" y="833.00" width="18" height="1.38" fill="#c8283c"/><rect x="1189" y="835.77" width="18" height="1.38" fill="#c8283c"/><rect x="1189" y="838.54" width="18" height="1.38" fill="#c8283c"/><rect x="1189" y="841.31" width="18" height="1.38" fill="#c8283c"/><rect x="1189" y="844.08" width="18" height="1.38" fill="#c8283c"/><rect x="1189" y="846.85" width="18" height="1.38" fill="#c8283c"/><rect x="1189" y="849.62" width="18" height="1.38" fill="#c8283c"/><rect x="1189" y="833" width="9.00" height="9.69" fill="#5562a0"/>
<path d="M1209.5 840.16H1212.58L1217.2 836V849L1212.58 844.84H1209.5Z" fill="#9a9c98" stroke="#5a5c58" stroke-width=".8"/><path d="M1220.0 839.64C1222.8 841.46 1222.8 843.54 1220.0 845.36" stroke="#5a8ad0" fill="none" stroke-width="1.2"/>
<path d="M1231.5 835.5C1231 840.05 1232.5 842.0 1234.75 842.26C1237.0 842.0 1238.5 840.05 1238.0 835.5Z" fill="#e8e8e8" stroke="#a0a0a0" stroke-width=".6"/><path d="M1231.6 837.84C1231.5 840.44 1232.875 842.0 1234.75 842.0C1236.625 842.0 1238.0 840.44 1237.9 837.84Z" fill="#b0101c"/><path d="M1234.75 842.0V847.59M1232.125 847.98H1237.375" stroke="#a8a8a8" stroke-width="1.3"/>
<rect x="1244.404" y="836.56" width="7.359999999999999" height="9.88" fill="#4c5238" stroke="#20221a" stroke-width="1"/><rect x="1246.244" y="839.16" width="3.6799999999999997" height="4.68" fill="#a8aaa0" stroke="#d8d8d0" stroke-width=".6"/><path d="M1245.1399999999999 835.78H1251.12M1245.1399999999999 847.22H1251.12" stroke="#d6cc80" stroke-width="1.30" stroke-dasharray="0.92 0.64"/><path d="M1243.76 838.25V845.4" stroke="#e0d890" stroke-width="1.10" stroke-dasharray="1.30 0.91"/><rect x="1253.0" y="834.5" width="7.800000000000001" height="14.5" rx="1" fill="#f8f8f8" stroke="#202020" stroke-width="1"/><rect x="1253.5" y="841.24" width="6.800000000000001" height="7.26" fill="#6868d8"/><rect x="1253.5" y="838.25" width="6.800000000000001" height="1.3" fill="#d0d0e0"/>
<defs><radialGradient id="sp3" cx="0.45" cy="0.35" r="0.75"><stop offset="0" stop-color="#e4e4e4"/><stop offset="0.6" stop-color="#bcbcbc"/><stop offset="1" stop-color="#909090"/></radialGradient></defs><circle cx="1313" cy="842" r="5.4" fill="url(#sp3)"/>
</g>
<g id="outer">
<g transform="translate(0,872) scale(1)" fill="#3b3c3a"><path d="M6.2 14.6C8 12.8 10 12.2 11.8 12.3C14.5 12.2 16.5 12.800 17 14C17.5 15.600 16.5 16.800 14.6 17.800C13 18.700 11.5 19.5 10.8 20.300C9.800 21.300 9.900 22.400 10.8 23.200C11.600 23.900 12.600 23.900 13 23C13.300 22.200 13.200 21.600 13.600 21.300C14.5 20.800 16 20.800 16.800 21.200C17.300 22 17 23.200 16.200 24C15 25.200 13 25.900 11 25.800C9.5 25.700 8.300 25 7.200 23.800C6 22.5 5.200 21 4.800 19C4.5 17.300 5 15.800 6.200 14.600Z"/><ellipse cx="4.35" cy="12.1" rx="1.05" ry="1.75" transform="rotate(-36 4.35 12.1)"/><ellipse cx="7.6" cy="9.6" rx="1.2" ry="2.2" transform="rotate(-14 7.6 9.6)"/><ellipse cx="11.35" cy="8.5" rx="1.45" ry="2.4" transform="rotate(6 11.35 8.5)"/><path d="M14.2 9.600C14.5 7.800 16 6.300 18 5.600C19.600 5.100 20.800 5.400 21.600 6.300C22.400 7.200 22.900 8 23 8.700C22.200 8.300 21.600 7.600 20.800 7.200C20 7.400 19.5 8.300 18.800 9.200C17.800 10.400 16.5 11 15.300 10.800C14.5 10.600 14.100 10.200 14.200 9.600Z"/></g>
<rect x="29" y="873" width="1" height="27" fill="#3a3a3a"/><rect x="30" y="876" width="1" height="24" fill="#f8f8f8"/>
<defs><linearGradient id="hl" x1="0" y1="0" x2="0" y2="1"><stop offset="0" stop-color="#f6f6f6"/><stop offset="1" stop-color="#d8d8d8"/></linearGradient></defs>
<rect x="34" y="876.500" width="22" height="26" rx="3" fill="url(#hl)"/>
<g opacity="1"><path d="M35.5 895.5V880.5L36.5 879.5H42.6L44.0 881.89H53.5L54.5 882.89V895.5Z" fill="#6f9ad5" stroke="#2f62ae"/><path d="M36.5 894.5V884.1H43.0L44.6 882.74H53.5V894.5Z" fill="#a9c5ea"/></g>
<rect x="41" y="885.500" width="8" height="7" fill="none" stroke="#2f62ae" stroke-width="1" stroke-dasharray="2 2"/><rect x="43.500" y="887" width="3" height="4" fill="#a9c5ea" stroke="#2f62ae" stroke-width=".9"/>
<rect x="60.5" y="879.2" width="19" height="16.8" rx="1.6" fill="#50524e" stroke="#2c2e2a"/><rect x="62.2" y="880.9000000000001" width="15.6" height="11.600000000000001" fill="#303234" stroke="#9a9c98" stroke-width=".8"/><path d="M64.8 884.3960000000001L67.6 886.354L64.8 888.312M68.4 888.668H71.2" stroke="#f4f4f4" stroke-width="1.33" fill="none"/><rect x="62.2" y="893.6" width="2.4" height="1.3" fill="#73d216"/>
<path d="M85.5 896.5V880.5L87.5 878.5H100.0L102.0 880.5V896.5Z" fill="#e4e4e0" stroke="#8e908c"/><rect x="87.5" y="882" width="12.5" height="5.5" fill="#c2c2be" stroke="#70726e"/><rect x="87.5" y="888.5" width="12.5" height="5.5" fill="#c2c2be" stroke="#70726e"/><rect x="91.125" y="883.8" width="5.25" height="1.8" fill="#60625e"/><rect x="91.125" y="890.3" width="5.25" height="1.8" fill="#60625e"/>
<rect x="109.5" y="877.5" width="17" height="19.5" rx="1.2" fill="#5a5c58" stroke="#3a3c38"/><rect x="111" y="879.2" width="14" height="4.1000000000000005" fill="#9be552" stroke="#4e9a06" stroke-width=".6"/><rect x="111.35" y="885.25" width="2.60" height="1.62" fill="#8c8e8a"/><rect x="114.85" y="885.25" width="2.60" height="1.62" fill="#8c8e8a"/><rect x="118.35" y="885.25" width="2.60" height="1.62" fill="#8c8e8a"/><rect x="121.85" y="885.25" width="2.60" height="1.62" fill="#8c8e8a"/><rect x="111.35" y="887.78" width="2.60" height="1.62" fill="#8c8e8a"/><rect x="114.85" y="887.78" width="2.60" height="1.62" fill="#8c8e8a"/><rect x="118.35" y="887.78" width="2.60" height="1.62" fill="#8c8e8a"/><rect x="121.85" y="887.78" width="2.60" height="1.62" fill="#8c8e8a"/><rect x="111.35" y="890.30" width="2.60" height="1.62" fill="#8c8e8a"/><rect x="114.85" y="890.30" width="2.60" height="1.62" fill="#8c8e8a"/><rect x="118.35" y="890.30" width="2.60" height="1.62" fill="#8c8e8a"/><rect x="121.85" y="890.30" width="2.60" height="1.62" fill="#8c8e8a"/><rect x="111.35" y="892.83" width="2.60" height="1.62" fill="#8c8e8a"/><rect x="114.85" y="892.83" width="2.60" height="1.62" fill="#8c8e8a"/><rect x="118.35" y="892.83" width="2.60" height="1.62" fill="#8c8e8a"/><rect x="121.85" y="892.83" width="2.60" height="1.62" fill="#8c8e8a"/>
<rect x="132.7" y="879.3" width="18.3" height="17.2" fill="#fff" stroke="#006400" stroke-width="2"/><path d="M135.15099999999998 882.524H140.83499999999998L143.474 885.9799999999999L145.504 882.9079999999999H149.158L145.09799999999998 887.9L149.158 893.66H143.88L141.03799999999998 889.8199999999999L139.00799999999998 893.66H134.94799999999998L139.414 887.516Z" fill="#006c00"/><path d="M141.85 888.284L149.158 892.1239999999999" stroke="#fff" stroke-width=".7"/>
<rect x="156.8" y="879.3" width="18" height="17.2" fill="#fff" stroke="#08088a" stroke-width="2"/><path d="M159.0 883.4839999999999H162.60000000000002L163.0 888.8599999999999L165.8 883.4839999999999H168.20000000000002L168.4 888.8599999999999L171.0 883.4839999999999H173.8L169.4 892.6999999999999H166.20000000000002L165.8 887.9L163.4 892.6999999999999H160.20000000000002Z" fill="#08088a"/>
<defs><radialGradient id="sp4" cx="0.45" cy="0.35" r="0.75"><stop offset="0" stop-color="#f2f5fb"/><stop offset="0.6" stop-color="#c8d3e8"/><stop offset="1" stop-color="#a2aed0"/></radialGradient></defs><circle cx="190" cy="888" r="11.6" fill="url(#sp4)"/>
<g opacity="1"><path d="M217.2 894.5V881.5L218.2 880.5H223.00799999999998L224.17 882.55H231.79999999999998L232.79999999999998 883.55V894.5Z" fill="#b4cbe9" stroke="#8fb0dc"/><path d="M218.2 893.5V884.5H223.33999999999997L224.66799999999998 883.3H231.79999999999998V893.5Z" fill="#d4e2f4"/></g>
<defs><radialGradient id="sp5" cx="0.45" cy="0.35" r="0.75"><stop offset="0" stop-color="#f2f5fb"/><stop offset="0.6" stop-color="#c8d3e8"/><stop offset="1" stop-color="#a2aed0"/></radialGradient></defs><circle cx="371.5" cy="888" r="8.5" fill="url(#sp5)"/>
<rect x="506.500" y="877.500" width="146" height="22" rx="2.500" fill="#dcdcdc" stroke="#b0b0b0"/>
<g transform="translate(511,879) scale(1.06)"><rect x="0" y="0" width="16" height="16" rx="2" fill="#fff"/><path d="M2 2.500L5.300 13L8.800 2.500" stroke="#ff2020" stroke-width="2" fill="none" stroke-linejoin="round" stroke-linecap="round"/><path d="M10.800 7.300V4.200C10.800 2.600 14.200 2.600 14.200 4.200V7.300" stroke="#10a010" stroke-width="1.700" fill="none"/><path d="M14.500 9.300H12.500C10.200 9.300 10.200 13 12.500 13H14.500" stroke="#1850ff" stroke-width="1.700" fill="none"/></g>
<g opacity="1"><path d="M658.0 894.5V881.5L659.0 880.5H663.808L664.97 882.55H672.6L673.6 883.55V894.5Z" fill="#b4cbe9" stroke="#8fb0dc"/><path d="M659.0 893.5V884.5H664.14L665.468 883.3H672.6V893.5Z" fill="#d4e2f4"/></g>
<rect x="806" y="880" width="16" height="15" fill="#e2e2e2" stroke="#d8d8d8"/>
<rect x="948" y="876.500" width="27" height="26" rx="3" fill="url(#hl)"/>
<g opacity="1"><path d="M950.0 896.0V881.0L951.0 880.0H958.43L960.075 882.39H971.5L972.5 883.39V896.0Z" fill="#8fb0dc" stroke="#6f95c8"/><path d="M951.0 895.0V884.6H958.9L960.78 883.24H971.5V895.0Z" fill="#b4cbe9"/></g>
<rect x="950" y="892.500" width="23" height="1.2" fill="#f0f0f0"/><rect x="957" y="891" width="9" height="3.600" rx="1" fill="#4a4a4a"/><path d="M966 897L973 890V897Z" fill="#20e020"/>
<circle cx="995" cy="888" r="10.8" fill="#2f9fd8"/><path d="M988.500 888L1001 883L999 894L995.500 891L993.500 893.500L993 890L999 885L991.500 889.500Z" fill="#fff"/>
<ellipse cx="1020.3" cy="888" rx="8.6" ry="11.8" fill="#3f78bd" stroke="#2a5a9a" stroke-width=".8"/><path d="M1016.43 884.224L1023.9119999999999 891.54L1020.3 895.316V880.684L1023.9119999999999 884.46L1016.43 891.776" stroke="#fff" stroke-width="1.56" fill="none" stroke-linejoin="round"/>
<defs><radialGradient id="dr2" cx="0.5" cy="0.5" r="0.5"><stop offset="0" stop-color="#b8d4ee"/><stop offset="0.7" stop-color="#7eaad8"/><stop offset="1" stop-color="#4a7cb8"/></radialGradient></defs><path d="M1045.3 877C1048.78 883.6 1054.0 886.9 1054.0 891.96C1054.0 896.8 1049.6499999999999 899 1045.3 899C1040.95 899 1036.6 896.8 1036.6 891.96C1036.6 886.9 1041.82 883.6 1045.3 877Z" fill="#3566a6" stroke="#2b5c9c" stroke-width=".8"/><circle cx="1045.822" cy="891.52" r="5.916" fill="url(#dr2)"/>
<rect x="1058.2" y="876" width="23.5" height="24" fill="#fff"/><rect x="1058.2" y="876.00" width="23.5" height="1.85" fill="#c8283c"/><rect x="1058.2" y="879.69" width="23.5" height="1.85" fill="#c8283c"/><rect x="1058.2" y="883.38" width="23.5" height="1.85" fill="#c8283c"/><rect x="1058.2" y="887.08" width="23.5" height="1.85" fill="#c8283c"/><rect x="1058.2" y="890.77" width="23.5" height="1.85" fill="#c8283c"/><rect x="1058.2" y="894.46" width="23.5" height="1.85" fill="#c8283c"/><rect x="1058.2" y="898.15" width="23.5" height="1.85" fill="#c8283c"/><rect x="1058.2" y="876" width="11.75" height="12.92" fill="#5562a0"/>
<path d="M1085.5 884.94H1088.8L1093.75 879.5V896.5L1088.8 891.06H1085.5Z" fill="#9a9c98" stroke="#5a5c58" stroke-width=".8"/><path d="M1096.75 884.26C1099.75 886.64 1099.75 889.36 1096.75 891.74" stroke="#5a8ad0" fill="none" stroke-width="1.2"/>
<g stroke="#2a4a80" stroke-width=".7"><rect x="1111" y="891" width="4" height="6" fill="#4878c0"/><rect x="1115.500" y="887" width="4" height="10" fill="#4878c0"/><rect x="1120" y="883" width="4" height="14" fill="#4878c0"/><rect x="1124.500" y="880" width="4.500" height="17" fill="#d0d0d0" stroke="#707070"/></g>
<rect x="1136" y="879" width="11" height="16" rx="1" fill="#f0f0ec" stroke="#8a8a86"/><rect x="1139" y="877.300" width="5" height="2" fill="#8a8a86"/><path d="M1142.500 881.500L1138.500 887.500H1141.500L1140 892L1145 885.500H1142Z" fill="#f0a020"/><rect x="1137" y="891" width="9" height="3.500" fill="#3a68b0"/><path d="M1146 888.500C1146 886.500 1153.500 886.500 1153.500 888.500V893H1155.500V896.500H1144V893H1146Z" fill="#e0e0e0" stroke="#909090" stroke-width=".8"/><path d="M1148 896.500V898M1151.500 896.500V898" stroke="#909090" stroke-width="1.2"/>
<path d="M1165.2 879C1164.7 885.3 1166.38 888.0 1168.9 888.36C1171.42 888.0 1173.1000000000001 885.3 1172.6000000000001 879Z" fill="#e8e8e8" stroke="#a0a0a0" stroke-width=".6"/><path d="M1165.3 882.24C1165.2 885.84 1166.8 888.0 1168.9 888.0C1171.0 888.0 1172.6000000000001 885.84 1172.5000000000002 882.24Z" fill="#b0101c"/><path d="M1168.9 888.0V895.74M1165.96 896.28H1171.8400000000001" stroke="#a8a8a8" stroke-width="1.3"/>
<rect x="1181.86" y="881.92" width="12.4" height="12.16" fill="#4c5238" stroke="#20221a" stroke-width="1"/><rect x="1184.96" y="885.12" width="6.2" height="5.76" fill="#a8aaa0" stroke="#d8d8d0" stroke-width=".6"/><path d="M1183.1 880.96H1193.175M1183.1 895.04H1193.175" stroke="#d6cc80" stroke-width="1.60" stroke-dasharray="1.55 1.09"/><path d="M1180.775 884.0V892.8" stroke="#e0d890" stroke-width="1.86" stroke-dasharray="1.60 1.12"/><rect x="1196.0" y="879.5" width="7.5" height="17.5" rx="1" fill="#f8f8f8" stroke="#202020" stroke-width="1"/><rect x="1196.5" y="887.68" width="6.5" height="8.82" fill="#6868d8"/><rect x="1196.5" y="884.0" width="6.5" height="1.6" fill="#d0d0e0"/>
<defs><radialGradient id="sp6" cx="0.45" cy="0.35" r="0.75"><stop offset="0" stop-color="#e2e2e2"/><stop offset="0.6" stop-color="#b8b8b8"/><stop offset="1" stop-color="#8a8a8a"/></radialGradient></defs><circle cx="1273.7" cy="888" r="7.4" fill="url(#sp6)"/>
<path d="M1014.6 865V880.200L1018 877.200L1020.600 883L1023 882L1020.5 876.200H1025.400Z" fill="#fff" stroke="#000" stroke-width="1"/>
<path d="M1030.300 848.300V851H1032.800Z" fill="#000"/>
</g>
</svg>
<span class="a t" id="vtt" style="left:637.75px;top:1.00px;height:21px;line-height:21px;font-size:13.4px;color:#fff;font-weight:bold;transform-origin:0 50%;transform:scaleX(1.1541);text-shadow:0 1px 1px #000">yes - VNC Viewer</span>
<span class="a t" id="ltt" style="left:20.0px;top:46.50px;height:14px;line-height:14px;font-size:9.0px;color:#fff;font-weight:normal;transform-origin:0 50%;transform:scaleX(1.0779);">LTspice XVII - [bokarev_16.raw]</span>
<span class="a t" id="m1" style="left:21.5px;top:62.60px;height:15px;line-height:15px;font-size:9.3px;color:#1c1c1c;font-weight:normal;transform-origin:0 50%;transform:scaleX(0.9167);"><u>F</u>ile</span>
<span class="a t" id="m2" style="left:45.0px;top:62.60px;height:15px;line-height:15px;font-size:9.3px;color:#1c1c1c;font-weight:normal;transform-origin:0 50%;transform:scaleX(0.9125);"><u>V</u>iew</span>
<span class="a t" id="m3" style="left:72.5px;top:62.60px;height:15px;line-height:15px;font-size:9.3px;color:#1c1c1c;font-weight:normal;transform-origin:0 50%;transform:scaleX(0.8908);"><u>P</u>lot Settings</span>
<span class="a t" id="m4" style="left:130.0px;top:62.60px;height:15px;line-height:15px;font-size:9.3px;color:#1c1c1c;font-weight:normal;transform-origin:0 50%;transform:scaleX(0.9097);"><u>S</u>imulation</span>
<span class="a t" id="m5" style="left:180.25px;top:62.60px;height:15px;line-height:15px;font-size:9.3px;color:#1c1c1c;font-weight:normal;transform-origin:0 50%;transform:scaleX(0.8863);"><u>T</u>ools</span>
<span class="a t" id="m6" style="left:209.0px;top:62.60px;height:15px;line-height:15px;font-size:9.3px;color:#1c1c1c;font-weight:normal;transform-origin:0 50%;transform:scaleX(0.8994);"><u>W</u>indow</span>
<span class="a t" id="m7" style="left:248.75px;top:62.60px;height:15px;line-height:15px;font-size:9.3px;color:#1c1c1c;font-weight:normal;transform-origin:0 50%;transform:scaleX(0.8490);"><u>H</u>elp</span>
<span class="a t" id="t1" style="left:28.0px;top:104.50px;height:15px;line-height:15px;font-size:9.3px;color:#1c1c1c;font-weight:normal;transform-origin:0 50%;transform:scaleX(0.8516);">bokarev_16.asc</span>
<span class="a t" id="t2" style="left:113.4px;top:104.50px;height:15px;line-height:15px;font-size:9.3px;color:#1c1c1c;font-weight:normal;transform-origin:0 50%;transform:scaleX(0.8601);">bokarev_16.raw</span>
<span class="a t" id="vout" style="left:708.7px;top:116.40px;height:17px;line-height:17px;font-size:10.6px;color:#0000f0;font-weight:bold;transform-origin:0 50%;transform:scaleX(0.9152);">V(out)</span>
<span class="a t" id="st" style="left:7.800000000000001px;top:817.50px;height:15px;line-height:15px;font-size:9.3px;color:#222;font-weight:normal;transform-origin:0 50%;transform:scaleX(0.8846);">x = 946.119ms    y = -14.59V</span>
<span class="a t" id="i1" style="left:181.0px;top:834.10px;height:15px;line-height:15px;font-size:9.4px;color:#2e3436;font-weight:normal;transform-origin:0 50%;transform:scaleX(1.1525);">[Mercyful Fate - Curse Of T...</span>
<span class="a t" id="i2" style="left:348.0px;top:834.10px;height:15px;line-height:15px;font-size:9.4px;color:#2e3436;font-weight:normal;transform-origin:0 50%;transform:scaleX(1.0355);">CAD</span>
<span class="a t" id="i3" style="left:516.0px;top:834.10px;height:15px;line-height:15px;font-size:9.4px;color:#2e3436;font-weight:normal;transform-origin:0 50%;transform:scaleX(1.1457);">LTspice XVII - [bokarev_16.r...</span>
<span class="a t" id="i4" style="left:1271.2px;top:834.10px;height:15px;line-height:15px;font-size:9.4px;color:#2e3436;font-weight:normal;transform-origin:0 50%;transform:scaleX(0.8240);">1</span>
<span class="a t" id="i5" style="left:1285.3px;top:834.10px;height:15px;line-height:15px;font-size:9.4px;color:#2e3436;font-weight:normal;transform-origin:0 50%;transform:scaleX(1.0080);">GHz</span>
<span class="a t" id="i6" style="left:1320.3px;top:834.10px;height:15px;line-height:15px;font-size:9.4px;color:#2e3436;font-weight:normal;transform-origin:0 50%;transform:scaleX(1.1284);">5 °C</span>
<span class="a t" id="i7" style="left:1350.2px;top:834.10px;height:15px;line-height:15px;font-size:9.4px;color:#2e3436;font-weight:normal;transform-origin:0 50%;transform:scaleX(1.1619);">Вт, 30 мар, 02:01</span>
<span class="a t" id="o1" style="left:240.5px;top:878.60px;height:20px;line-height:20px;font-size:12.7px;color:#2e3436;font-weight:normal;transform-origin:0 50%;transform:scaleX(1.1261);">[Record]</span>
<span class="a t" id="o2" style="left:387.5px;top:878.60px;height:20px;line-height:20px;font-size:12.7px;color:#2e3436;font-weight:normal;transform-origin:0 50%;transform:scaleX(1.1692);">Германиевые ...</span>
<span class="a t" id="o3" style="left:534.5px;top:878.60px;height:20px;line-height:20px;font-size:12.7px;color:#2e3436;font-weight:normal;transform-origin:0 50%;transform:scaleX(1.1312);">yes - VNC Viewer</span>
<span class="a t" id="o4" style="left:682.0px;top:878.60px;height:20px;line-height:20px;font-size:12.7px;color:#2e3436;font-weight:normal;transform-origin:0 50%;transform:scaleX(1.2602);">[11]</span>
<span class="a t" id="o5" style="left:828.5px;top:878.60px;height:20px;line-height:20px;font-size:12.7px;color:#2e3436;font-weight:normal;transform-origin:0 50%;transform:scaleX(1.2143);">[*[Снимок экр...</span>
<span class="a t" id="o6" style="left:1207.0px;top:878.60px;height:20px;line-height:20px;font-size:12.7px;color:#2e3436;font-weight:normal;transform-origin:0 50%;transform:scaleX(1.0646);">1,45</span>
<span class="a t" id="o7" style="left:1237.0px;top:878.60px;height:20px;line-height:20px;font-size:12.7px;color:#2e3436;font-weight:normal;transform-origin:0 50%;transform:scaleX(1.0128);">GHz</span>
<span class="a t" id="o8" style="left:1284.3px;top:878.60px;height:20px;line-height:20px;font-size:12.7px;color:#2e3436;font-weight:normal;transform-origin:0 50%;transform:scaleX(1.0955);">6 °C</span>
<span class="a t" id="o9" style="left:1324.3px;top:878.60px;height:20px;line-height:20px;font-size:12.7px;color:#2e3436;font-weight:normal;transform-origin:0 50%;transform:scaleX(1.1490);">Вт, 30 мар, 02:01</span>

</div></body></html>
